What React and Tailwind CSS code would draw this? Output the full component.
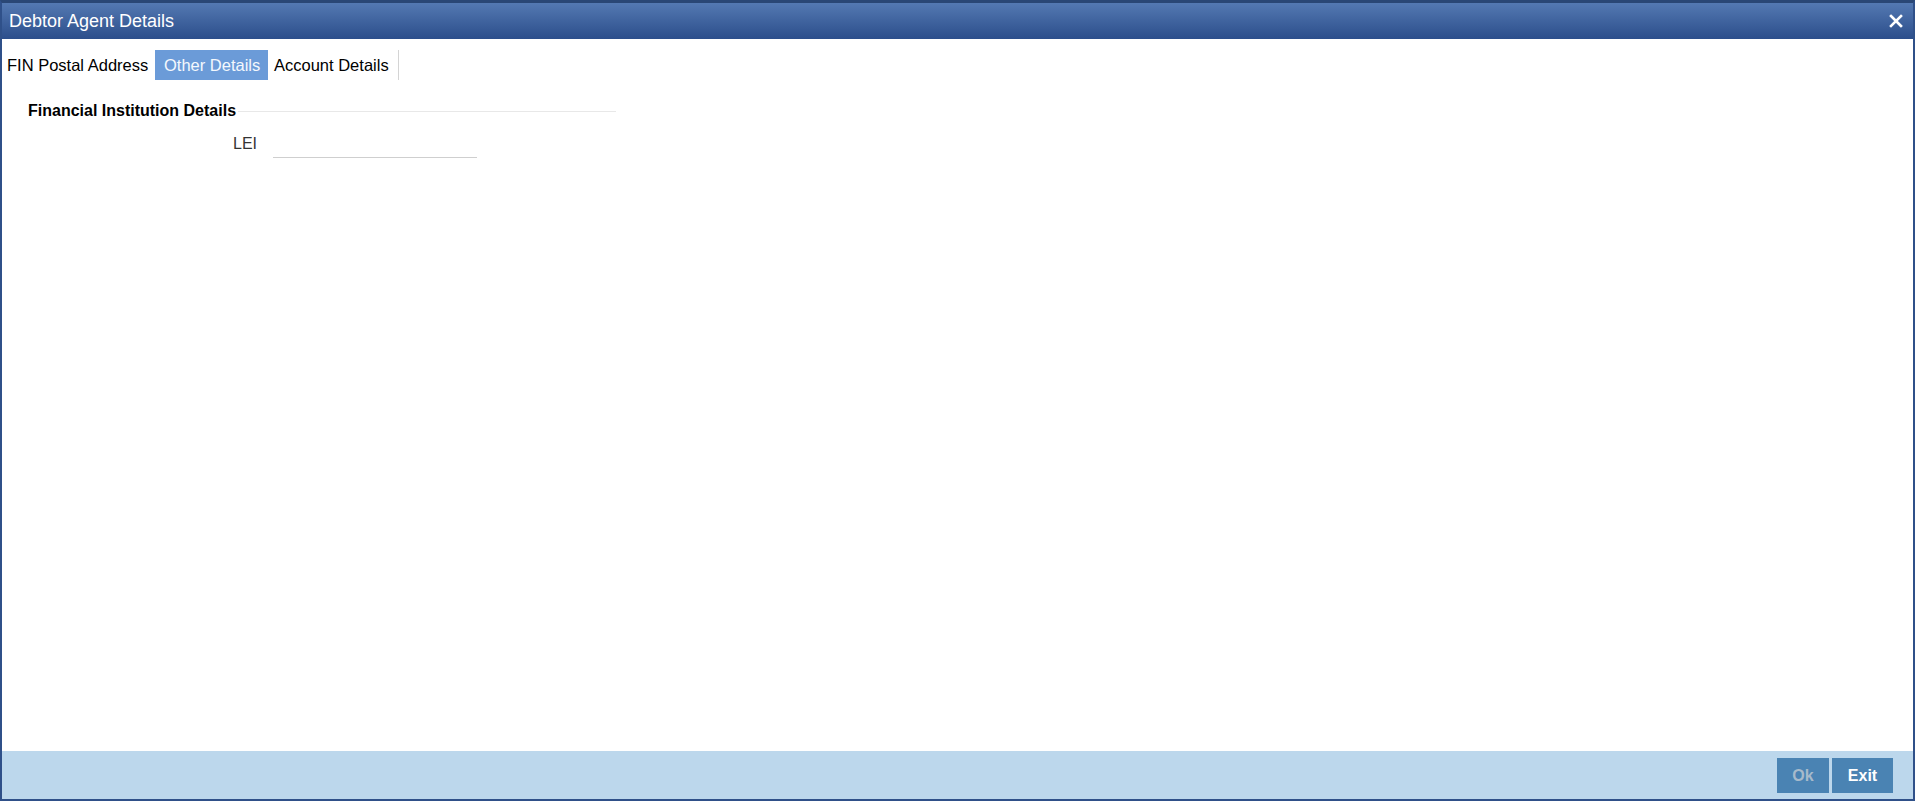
import React, { useState } from 'react';

const tabs = [
  { label: 'FIN Postal Address', size: 'w-[153px] pl-[5px]' },
  { label: 'Other Details', size: 'w-[113px] pl-[9px]' },
  { label: 'Account Details', size: 'w-[130px] pl-[6px]' },
];

export default function App() {
  const [activeTab, setActiveTab] = useState('Other Details');
  const [lei, setLei] = useState('');

  return (
    <div className="w-full h-[802px] bg-white font-['Liberation_Sans',Arial,sans-serif]">
      <div className="w-[1915px] h-[801px] flex flex-col border-x-2 border-b-2 border-t-[3px] border-x-[#2f5089] border-b-[#2f5089] border-t-[#2a4775]">
        {/* Title bar */}
        <div className="h-[36px] shrink-0 flex items-center justify-between pl-[7px] pr-[10px] bg-gradient-to-b from-[#5479b2] to-[#2c4e8b]">
          <span className="text-[18px] text-white leading-none">Debtor Agent Details</span>
          <button className="text-white" aria-label="Close">
            <svg width="14" height="14" viewBox="0 0 14 14">
              <path d="M2 2 L12 12 M12 2 L2 12" stroke="white" strokeWidth="2.6" strokeLinecap="square" />
            </svg>
          </button>
        </div>

        {/* Body */}
        <div className="flex-1 flex flex-col">
          <div className="mt-[11px] h-[30px] flex items-stretch">
            {tabs.map((tab) => (
              <button
                key={tab.label}
                onClick={() => setActiveTab(tab.label)}
                className={`${tab.size} text-left text-[16.5px] leading-none whitespace-nowrap ${
                  activeTab === tab.label ? 'bg-[#6b9bd8] text-[#f4f8fd]' : 'text-black'
                }`}
              >
                {tab.label}
              </button>
            ))}
            <div className="w-px bg-[#d4d4d4]"></div>
          </div>

          {/* Financial Institution Details */}
          <div className="mt-[22px] ml-[26px] w-[588px] h-[18px] flex items-center">
            <span className="text-[16px] font-bold text-black leading-[18px] whitespace-nowrap">
              Financial Institution Details
            </span>
            <div className="flex-1 h-px bg-[#e8e8e8] ml-[2px] mt-[1px]"></div>
          </div>

          <div className="mt-[14px] flex items-start">
            <label className="w-[255px] text-right text-[16px] leading-[20px] text-[#333]">LEI</label>
            <input
              value={lei}
              onChange={(e) => setLei(e.target.value)}
              className="ml-[16px] w-[204px] h-[24px] border-b border-[#cfcfcf] outline-none text-[14px] px-1"
            />
          </div>
        </div>

        {/* Footer */}
        <div className="h-[48px] shrink-0 bg-[#bcd7ec] flex items-start justify-end pt-[7px] pr-[20px] gap-[3px]">
          <button className="w-[52px] h-[35px] bg-[#4a83b3] text-[#a7bacb] text-[16px] font-bold">Ok</button>
          <button className="w-[61px] h-[35px] bg-[#4a83b3] text-white text-[16px] font-bold">Exit</button>
        </div>
      </div>
    </div>
  );
}
